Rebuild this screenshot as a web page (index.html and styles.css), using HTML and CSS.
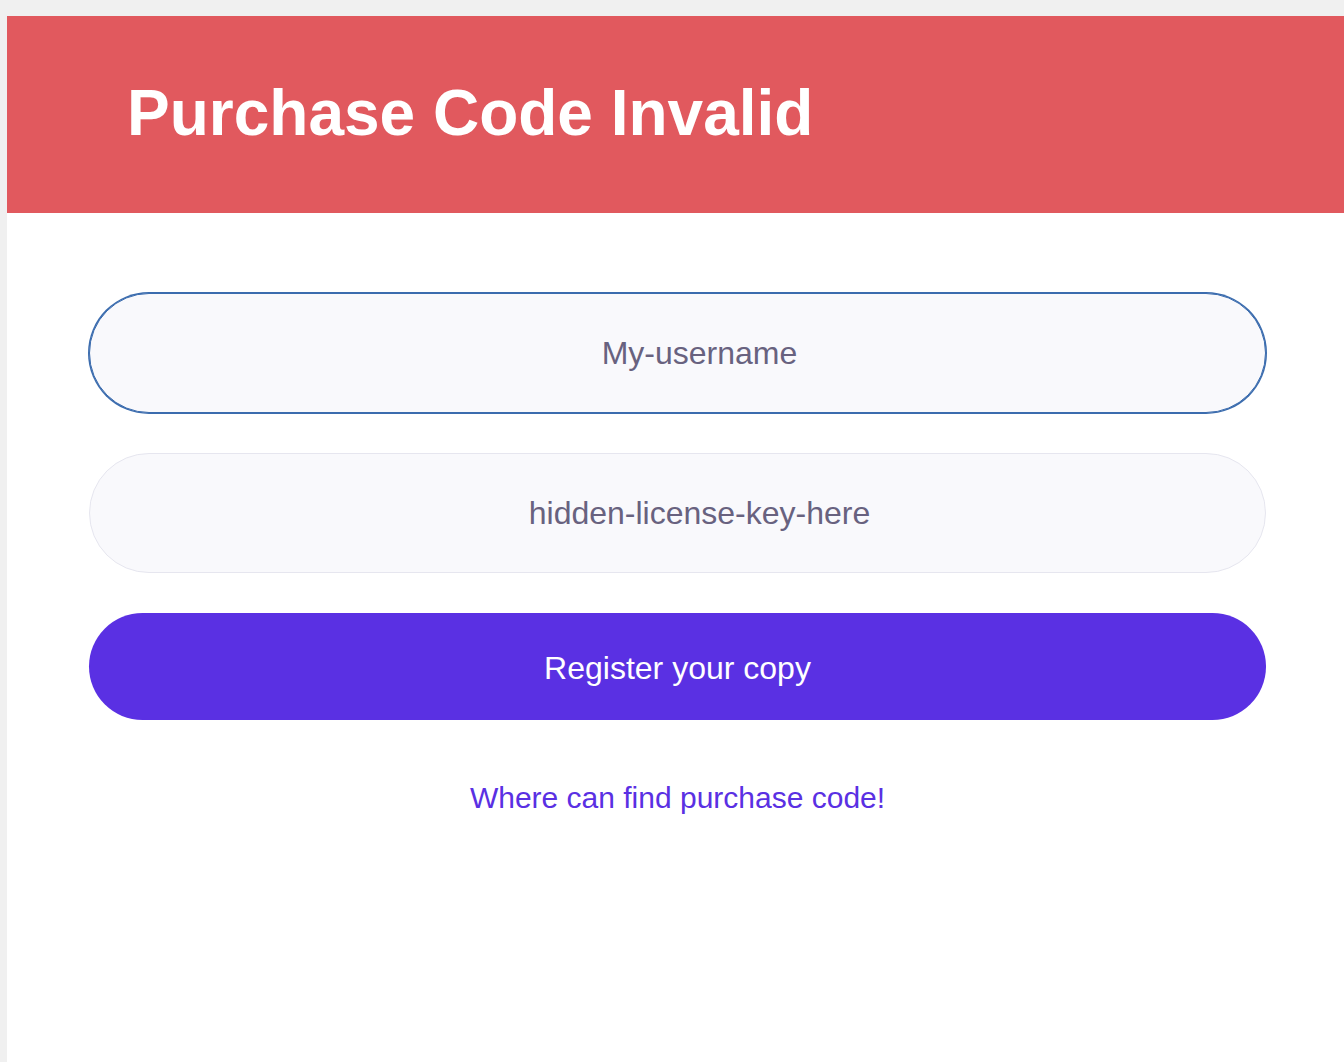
FILE: index.html
```html
<!DOCTYPE html>
<html lang="en">
<head>
<meta charset="utf-8">
<title>Purchase Code Invalid</title>
<link rel="stylesheet" href="styles.css">
</head>
<body>
<div class="panel">
  <header class="header">
    <h1 class="title">Purchase Code Invalid</h1>
  </header>
  <form class="form">
    <input class="field field-focus" type="text" value="My-username">
    <input class="field" type="text" value="hidden-license-key-here">
    <button class="submit" type="button">Register your copy</button>
    <a class="help" href="#">Where can find purchase code!</a>
  </form>
</div>
</body>
</html>
```
FILE: styles.css
```css
html, body {
  margin: 0;
  padding: 0;
}
body {
  background: #f0f0f0;
  font-family: "Liberation Sans", Arial, Helvetica, sans-serif;
  overflow: hidden;
}
.panel {
  margin: 16px 0 0 7px;
  background: #ffffff;
  min-height: 1046px;
}
.header {
  height: 197px;
  background: #e1595e;
  display: flex;
  align-items: center;
  padding-left: 120px;
  box-sizing: border-box;
}
.title {
  margin: 0;
  color: #ffffff;
  font-size: 64px;
  font-weight: bold;
  line-height: 1;
  position: relative;
  top: -2px;
}
.form {
  display: flex;
  flex-direction: column;
  padding: 80px 78px 0 82px;
}
.field {
  box-sizing: border-box;
  width: 100%;
  height: 120px;
  border: 1px solid #e6e6ef;
  border-radius: 60px;
  background: #f9f9fc;
  font-family: "Liberation Sans", Arial, Helvetica, sans-serif;
  font-size: 32px;
  color: #68627f;
  text-align: center;
  outline: none;
  margin: 0 0 40px 0;
  padding: 0 20px 0 64px;
}
.field-focus {
  border-color: #3b6cae;
  box-shadow: 0 0 0 1px #3b6cae;
}
.submit {
  height: 107px;
  border: none;
  border-radius: 54px;
  background: #5a30e3;
  color: #ffffff;
  font-family: "Liberation Sans", Arial, Helvetica, sans-serif;
  font-size: 32px;
  cursor: pointer;
  padding: 3px 0 0 0;
}
.help {
  margin-top: 61px;
  align-self: center;
  color: #5a30e3;
  font-size: 30px;
  line-height: 34px;
  text-decoration: none;
}
```
